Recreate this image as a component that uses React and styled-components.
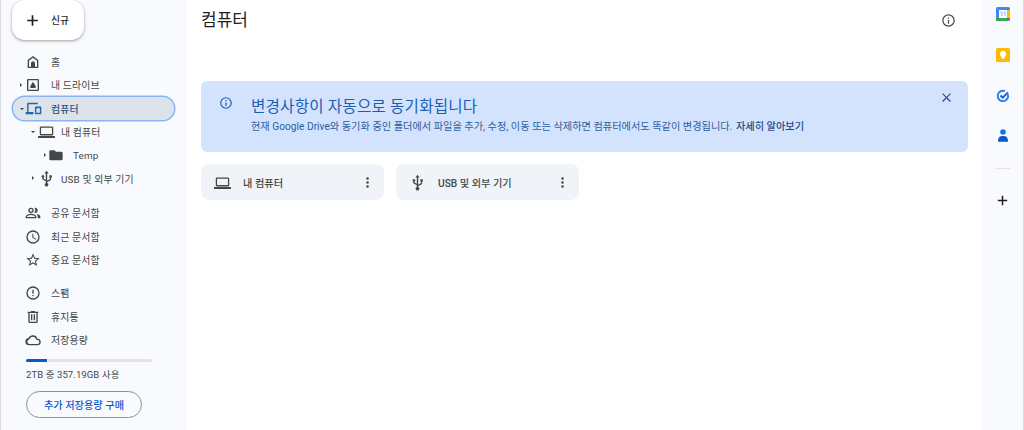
import React from "react";
import styled, { createGlobalStyle } from "styled-components";

const Global = createGlobalStyle`
  html, body { margin: 0; padding: 0; height: 100%; background: #fff; }
  #root { height: 430px; }
  * { box-sizing: border-box; }
`;

const FONT = `Roboto, "Noto Sans CJK KR", sans-serif`;

const Page = styled.div`
  width: 1024px; height: 430px; display: flex; overflow: hidden;
  font-family: ${FONT}; color: #444746;
`;
const Sidebar = styled.aside`
  width: 187px; flex: none; background: #f8fafd; display: flex; flex-direction: column;
  border-left: 1px solid #dcdcdc;
`;
const NewButton = styled.button`
  width: 72px; height: 40px; margin-left: 11px; flex: none; display: flex; align-items: center; gap: 10px;
  padding: 0 0 0 12px; border: 0; background: #fff; border-radius: 13px;
  box-shadow: 0 1px 2px rgba(60,64,67,.3), 0 1px 3px 1px rgba(60,64,67,.15);
  font: 500 9.8px ${FONT}; color: #1f1f1f;
`;
const Nav = styled.nav`
  display: flex; flex-direction: column; margin-top: ${p => p.$top}px;
`;
const Row = styled.div`
  height: 23.3px; flex: none; display: flex; align-items: center; font-size: 9.9px; letter-spacing: .15px;
  position: relative; margin: 0 11px 0 11px; padding-left: ${p => 14 + (p.$indent || 0)}px;
  color: #444746;
  ${p => p.$active ? `
    margin-left: 12px; margin-right: 13px; padding-left: 13px;
    background: #dde3ea; border-radius: 12px; box-shadow: 0 0 0 1.5px #8ab4f8; font-weight: 500; color: #27567f;
  ` : ""}
`;
const Caret = styled.span`
  width: 0; height: 0; position: absolute; left: ${p => p.$left}px; top: 50%;
  ${p => p.$open
    ? `margin-top: -1px; border-left: 2.5px solid transparent; border-right: 2.5px solid transparent; border-top: 2.5px solid currentColor;`
    : `margin-top: -2.5px; border-top: 2.5px solid transparent; border-bottom: 2.5px solid transparent; border-left: 2.5px solid currentColor;`}
  color: #3c3f41;
`;
const IconSlot = styled.span`
  width: 14px; height: 14px; flex: none; margin-right: ${p => p.$gap || 11}px; display: flex; align-items: center; justify-content: center;
  color: ${p => p.$color || "#444746"};
`;
const Glyph = styled.svg`
  flex: none; display: block;
`;
const Meter = styled.div`
  width: 126px; height: 3px; background: #e3e3e3; margin: 7px 0 0 25px; border-radius: 2px; overflow: hidden; flex: none;
  display: flex;
`;
const MeterFill = styled.div`
  height: 100%; background: #0b57d0; border-right: 1.5px solid #f8fafd;
`;
const StorageText = styled.div`
  margin: 6px 0 0 25px; font-size: 9.5px; color: #444746; letter-spacing: .1px; line-height: 13px;
`;
const BuyButton = styled.button`
  width: 116px; height: 27px; margin: 10px 0 0 25px; border: 1px solid #8e918f; border-radius: 14px; background: transparent;
  color: #0b57d0; font: 500 10.2px ${FONT}; padding: 0; flex: none;
`;
const Main = styled.main`
  flex: 1; min-width: 0; background: #fff; display: flex; flex-direction: column; padding: 0 14px;
`;
const Header = styled.header`
  height: 81px; flex: none; display: flex; justify-content: space-between; padding-top: 8px; align-items: flex-start;
`;
const Title = styled.h1`
  margin: 0; font: 400 17px/24px ${FONT}; color: #1f1f1f;
`;
const HeaderIcon = styled.span`
  display: flex; margin: 5px 12px 0 0; color: #444746;
`;
const Banner = styled.section`
  height: 71px; flex: none; background: #d3e3fd; border-radius: 6px; display: flex; position: relative;
  padding: 15px 0 0 18px; color: #1a5db5;
`;
const BannerText = styled.div`
  margin-left: 18px; display: flex; flex-direction: column;
`;
const BannerTitle = styled.div`
  font-size: 15.6px; line-height: 20px; letter-spacing: .2px; margin-top: 1px; color: #1a5db5;
`;
const BannerBody = styled.div`
  font-size: 10.2px; line-height: 13px; margin-top: 3px; color: #2c5f9e; white-space: nowrap;
`;
const BannerLink = styled.b`
  font-weight: 500; color: #1f4a86; margin-left: 1px;
`;
const CloseBtn = styled.span`
  position: absolute; right: 14px; top: 8.5px; display: flex; color: #2a4f8a;
`;
const Cards = styled.div`
  display: flex; gap: 12px; margin-top: 12px;
`;
const Card = styled.div`
  width: 183px; height: 36px; background: #f0f4f9; border-radius: 8px; display: flex; align-items: center;
  padding: 0 9px 0 14px; font-size: 10.2px; font-weight: 500; color: #444746;
`;
const CardLabel = styled.span`
  flex: 1;
`;
const Rail = styled.aside`
  width: 42px; flex: none; background: #f8fafd; display: flex; flex-direction: column; align-items: center; padding: 7px 0 0 0;
  border-right: 1px solid #dcdcdc;
`;
const RailItem = styled.div`
  height: ${p => p.$h || 41}px; width: 100%; display: flex; justify-content: center; flex: none;
`;
const RailDivider = styled.div`
  width: 15px; height: 1px; background: #e3e3e3; flex: none;
`;
const RailAdd = styled.div`
  margin-top: 24px; display: flex; justify-content: center; color: #1f1f1f;
`;

const S = ({ size = 16, children }) => (
  <Glyph width={size} height={size} viewBox="0 0 24 24" fill="currentColor">{children}</Glyph>
);
const Plus = ({ size = 17 }) => <S size={size}><path d="M19.5 13.2h-6.300v6.300h-2.400v-6.300H4.500v-2.400h6.300V4.500h2.400v6.300h6.300z" /></S>;
const Home = () => <S><path d="M12 3 4 9v12h16V9l-8-6zm6 16h-3v-5a3 3 0 0 0-6 0v5H6v-9l6-4.500 6 4.500v9z" /><path d="M10 14a2 2 0 0 1 4 0v5h-4z" /></S>;
const Drive = () => <S><path fillRule="evenodd" d="M5 3h14a2 2 0 0 1 2 2v14a2 2 0 0 1-2 2H5a2 2 0 0 1-2-2V5a2 2 0 0 1 2-2zm0 2v14h14V5H5z" /><path d="M12 7.200l4 6.300v3H8v-3z" /></S>;
const Devices = () => <S size={17}><path d="M3 6a2 2 0 0 1 2-2h13v2H5v11h7v3H1v-3h2V6z" /><path fillRule="evenodd" d="M15 9h7a1 1 0 0 1 1 1v9a1 1 0 0 1-1 1h-7a1 1 0 0 1-1-1v-9a1 1 0 0 1 1-1zm1 2.500V18h5v-6.500h-5z" /></S>;
const Laptop = ({ size = 17 }) => <S size={size}><path fillRule="evenodd" d="M4 5h16a1.500 1.500 0 0 1 1.500 1.500V16a1.500 1.500 0 0 1-1.500 1.500H4A1.500 1.500 0 0 1 2.500 16V6.500A1.500 1.500 0 0 1 4 5zm.3 1.800v8.900h15.400V6.800H4.300z" /><path d="M0 18.500h24V20a1 1 0 0 1-1 1H1a1 1 0 0 1-1-1z" /></S>;
const Folder = () => <S size={16}><path d="M10 5H4a2 2 0 0 0-2 2v11a2 2 0 0 0 2 2h16a2 2 0 0 0 2-2V9a2 2 0 0 0-2-2h-8l-2-2z" /></S>;
const Usb = () => <S size={17}><path d="M12 1l3 4h-2v10.100l4-2.300V11h-1V7.500h3.500V11h-1v3L13 17.300v1a2.500 2.500 0 1 1-2 0V16l-5-2.900v-2.400a1.900 1.900 0 1 1 1.900 0v1.300l3.100 1.800V5H9l3-4z" /></S>;
const People = () => <S size={16}><path d="M9 12a4 4 0 1 0 0-8 4 4 0 0 0 0 8zm0-6a2 2 0 1 1 0 4 2 2 0 0 1 0-4z" /><path d="M9 13c-3 0-8 1.500-8 4.500V20h16v-2.500C17 14.500 12 13 9 13zm-6 5v-.5c.3-1 3.500-2.500 6-2.500s5.700 1.500 6 2.500v.5H3z" /><path d="M15 4a4 4 0 0 1 0 8c-.5 0-.8 0-1.200-.2a5.800 5.800 0 0 0 0-7.600C14.200 4 14.500 4 15 4zM17 13.300c2.600.6 6 1.900 6 4.200V20h-4v-2.500c0-1.700-.8-3.100-2-4.200z" /></S>;
const Clock = () => <S><path d="M12 2a10 10 0 1 0 0 20 10 10 0 0 0 0-20zm0 18a8 8 0 1 1 0-16 8 8 0 0 1 0 16z" /><path d="M12.500 7H11v6l5.200 3.200.8-1.300-4.500-2.700z" /></S>;
const Star = () => <S><path d="M22 9.200l-7.200-.6L12 2 9.200 8.600 2 9.200l5.500 4.700L5.800 21l6.200-3.700 6.200 3.700-1.700-7.100L22 9.200zm-10 6.200l-3.800 2.300 1-4.300-3.300-2.900 4.400-.4 1.700-4 1.700 4 4.400.4-3.300 2.900 1 4.300-3.800-2.300z" /></S>;
const Info = ({ size = 14 }) => <S size={size}><path d="M11 7h2v2h-2zm0 4h2v6h-2z" /><path d="M12 2a10 10 0 1 0 0 20 10 10 0 0 0 0-20zm0 18a8 8 0 1 1 0-16 8 8 0 0 1 0 16z" /></S>;
const Spam = () => <S><path d="M11 7h2v6h-2zm0 8h2v2h-2z" /><path d="M12 2a10 10 0 1 0 0 20 10 10 0 0 0 0-20zm0 18a8 8 0 1 1 0-16 8 8 0 0 1 0 16z" /></S>;
const Trash = () => <S><path d="M15 4V3H9v1H4v2h1v13a2 2 0 0 0 2 2h10a2 2 0 0 0 2-2V6h1V4h-5zm2 15H7V6h10v13z" /><path d="M9 8h2v9H9zm4 0h2v9h-2z" /></S>;
const Cloud = () => <S size={16}><path fillRule="evenodd" d="M12 5a7 7 0 0 1 6.700 5A5 5 0 0 1 18.500 20H6a5.500 5.500 0 0 1-1-10.900A7 7 0 0 1 12 5zm0 2a5 5 0 0 0-5 3.400l-.4 1H6a3.500 3.500 0 0 0 0 6.600h12.500a3 3 0 0 0 0-6h-1.400l-.3-1.300A5 5 0 0 0 12 7z" /></S>;
const More = () => <S size={15}><circle cx="12" cy="5.5" r="2" /><circle cx="12" cy="12" r="2" /><circle cx="12" cy="18.5" r="2" /></S>;
const Close = () => <S size={15}><path d="M19 6.400 17.600 5 12 10.600 6.400 5 5 6.400 10.600 12 5 17.600 6.400 19 12 13.400 17.600 19 19 17.600 13.400 12z" /></S>;

const Calendar = () => (
  <svg width="14" height="14" viewBox="0 0 14 14">
    <rect width="14" height="14" rx="1.5" fill="#4285f4" />
    <rect x="3" y="3" width="8" height="8" fill="#fff" />
    <rect y="11" width="11" height="3" fill="#34a853" />
    <path d="M11 3h3v8h-3z" fill="#fbbc04" />
    <path d="M11 11h3l-3 3z" fill="#ea4335" />
    <path d="M4.500 5h1.500v4M7.500 5h1.500v4" stroke="#8ab4f8" strokeWidth="1" fill="none" />
  </svg>
);
const Keep = () => (
  <svg width="14" height="14" viewBox="0 0 14 14">
    <rect width="14" height="14" rx="1.5" fill="#fbbc04" />
    <circle cx="7" cy="6" r="3" fill="#fff" />
    <rect x="5.500" y="8" width="3" height="2.500" fill="#fff" />
  </svg>
);
const Tasks = () => (
  <svg width="14" height="14" viewBox="0 0 14 14">
    <path d="M11.800 5.200A5.200 5.200 0 1 1 9 2.200" fill="none" stroke="#2a7ff0" strokeWidth="1.900" />
    <path d="M4.500 6.500 6.700 8.700 12 3.400" fill="none" stroke="#1a5fd0" strokeWidth="1.900" />
  </svg>
);
const Contact = () => (
  <svg width="12" height="13" viewBox="0 0 12 13">
    <circle cx="6" cy="3" r="2.800" fill="#1a73e8" />
    <path d="M1 12.800c0-4.800 2-5.800 5-5.800s5 1 5 5.800z" fill="#0b57d0" />
  </svg>
);

const navTop = [
  { icon: <Home />, label: "홈" },
  { icon: <Drive />, label: "내 드라이브", caret: { left: 8 } },
];
const navShare = [
  { icon: <People />, label: "공유 문서함" },
  { icon: <Clock />, label: "최근 문서함" },
  { icon: <Star />, label: "중요 문서함" },
];
const navSystem = [
  { icon: <Spam />, label: "스팸" },
  { icon: <Trash />, label: "휴지통" },
  { icon: <Cloud />, label: "저장용량" },
];

const NavRow = ({ item }) => (
  <Row>
    {item.caret && <Caret $left={item.caret.left} />}
    <IconSlot>{item.icon}</IconSlot>
    {item.label}
  </Row>
);

export default function App() {
  return (
    <Page>
      <Global />
      <Sidebar>
        <NewButton><Plus />신규</NewButton>
        <Nav $top={10.4}>
          {navTop.map(i => <NavRow key={i.label} item={i} />)}
          <Row $active>
            <Caret $open $left={7} />
            <IconSlot $color="#1c6aa8"><Devices /></IconSlot>
            컴퓨터
          </Row>
          <Row $indent={13}>
            <Caret $open $left={19} />
            <IconSlot $gap={8}><Laptop /></IconSlot>내 컴퓨터
          </Row>
          <Row $indent={23}>
            <Caret $left={32} />
            <IconSlot $gap={10}><Folder /></IconSlot>Temp
          </Row>
          <Row $indent={13}>
            <Caret $left={20} />
            <IconSlot $gap={8}><Usb /></IconSlot>USB 및 외부 기기
          </Row>
        </Nav>
        <Nav $top={11.5}>
          {navShare.map(i => <NavRow key={i.label} item={i} />)}
        </Nav>
        <Nav $top={10.2}>
          {navSystem.map(i => <NavRow key={i.label} item={i} />)}
        </Nav>
        <Meter><MeterFill style={{ width: `${(357.19 / 2048) * 100}%` }} /></Meter>
        <StorageText>2TB 중 357.19GB 사용</StorageText>
        <BuyButton>추가 저장용량 구매</BuyButton>
      </Sidebar>
      <Main>
        <Header>
          <Title>컴퓨터</Title>
          <HeaderIcon><Info size={15} /></HeaderIcon>
        </Header>
        <Banner>
          <Info size={14} />
          <BannerText>
            <BannerTitle>변경사항이 자동으로 동기화됩니다</BannerTitle>
            <BannerBody>
              현재 Google Drive와 동기화 중인 폴더에서 파일을 추가, 수정, 이동 또는 삭제하면 컴퓨터에서도 똑같이 변경됩니다. <BannerLink>자세히 알아보기</BannerLink>
            </BannerBody>
          </BannerText>
          <CloseBtn><Close /></CloseBtn>
        </Banner>
        <Cards>
          <Card>
            <IconSlot $gap={14}><Laptop /></IconSlot>
            <CardLabel>내 컴퓨터</CardLabel>
            <More />
          </Card>
          <Card>
            <IconSlot $gap={14}><Usb /></IconSlot>
            <CardLabel>USB 및 외부 기기</CardLabel>
            <More />
          </Card>
        </Cards>
      </Main>
      <Rail>
        <RailItem><Calendar /></RailItem>
        <RailItem><Keep /></RailItem>
        <RailItem $h={40}><Tasks /></RailItem>
        <RailItem $h={39}><Contact /></RailItem>
        <RailDivider />
        <RailAdd><Plus size={15} /></RailAdd>
      </Rail>
    </Page>
  );
}
